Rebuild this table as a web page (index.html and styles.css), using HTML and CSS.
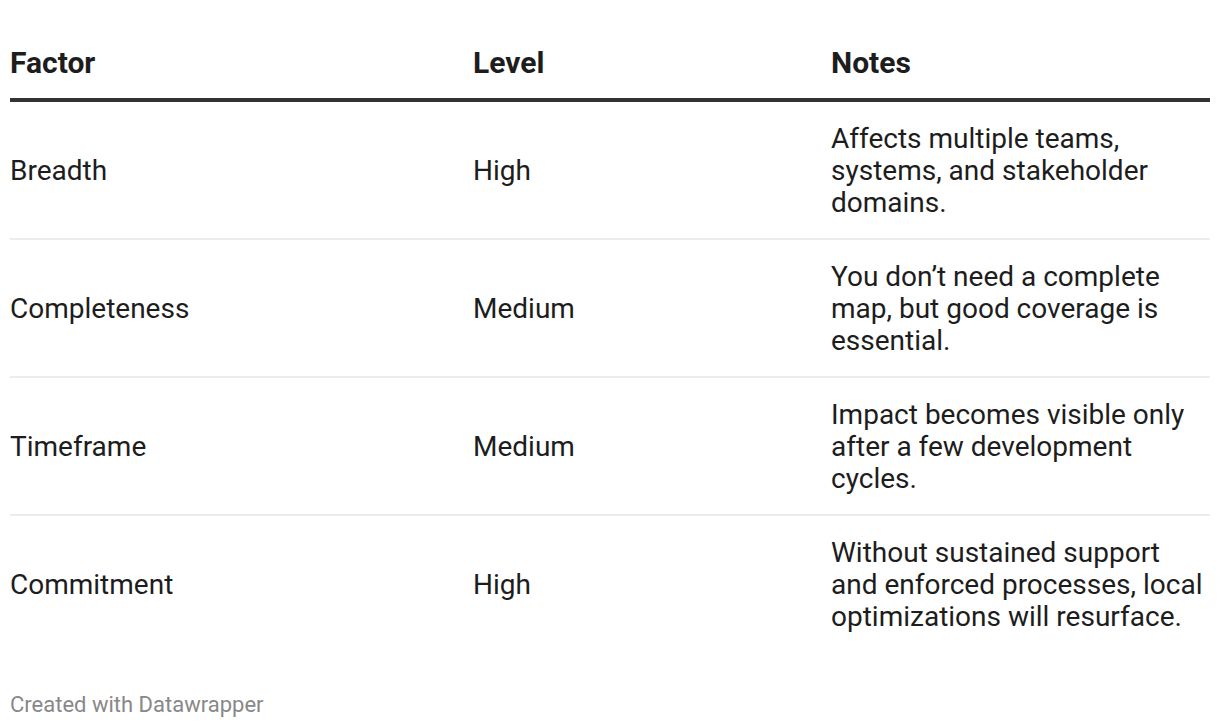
FILE: index.html
```html
<!DOCTYPE html>
<html>
<head>
<meta charset="utf-8">
<link rel="stylesheet" href="styles.css">
</head>
<body>
<div class="chart">
  <table class="tbl">
    <colgroup>
      <col class="c1"><col class="c2"><col class="c3">
    </colgroup>
    <thead>
      <tr><th>Factor</th><th>Level</th><th>Notes</th></tr>
    </thead>
    <tbody>
      <tr><td>Breadth</td><td>High</td><td class="notes">Affects multiple teams, systems, and stakeholder domains.</td></tr>
      <tr><td>Completeness</td><td>Medium</td><td class="notes">You don’t need a complete map, but good coverage is essential.</td></tr>
      <tr><td>Timeframe</td><td>Medium</td><td class="notes">Impact becomes visible only after a few development cycles.</td></tr>
      <tr class="last"><td>Commitment</td><td>High</td><td class="notes">Without sustained support and enforced processes, local optimizations will resurface.</td></tr>
    </tbody>
  </table>
  <div class="footer">Created with Datawrapper</div>
</div>
</body>
</html>
```
FILE: styles.css
```css
html, body { margin: 0; padding: 0; background: #fff; }
body { font-family: Roboto, "Liberation Sans", sans-serif; color: #1d1d1d; }
.chart { padding: 0 10px; }
.tbl { width: 1200px; border-collapse: collapse; table-layout: fixed; }
.c1 { width: 463px; }
.c2 { width: 358px; }
.c3 { width: 379px; }
th { text-align: left; font-weight: 700; font-size: 30px; line-height: 36px; padding: 45px 0 17px 0; border-bottom: 4px solid #333; vertical-align: bottom; }
td { font-size: 28px; line-height: 32px; padding: 21px 0 19px 0; border-bottom: 2px solid #ececec; vertical-align: middle; }
tr.last td { border-bottom: none; }
.footer { margin-top: 40px; font-size: 22px; line-height: 26px; color: #888; }
```
